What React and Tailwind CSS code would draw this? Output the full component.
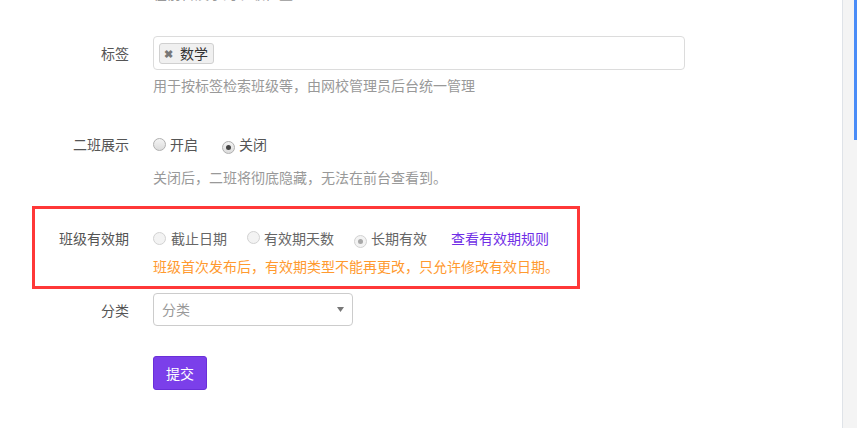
import React from "react";

const font = { fontFamily: '"Noto Sans CJK SC", "Noto Sans", sans-serif' };

const Radio = ({ checked, disabled }) => (
  <span
    className={`inline-flex h-[13px] w-[13px] items-center justify-center rounded-full border ${
      disabled ? "border-[#d2d2d2] bg-[#f3f3f3]" : "border-[#b0b0b0] bg-gradient-to-b from-[#f4f4f4] to-[#dcdcdc]"
    }`}
  >
    {checked && (
      <span className={`h-[5px] w-[5px] rounded-full ${disabled ? "bg-[#a8a8a8]" : "bg-[#444]"}`} />
    )}
  </span>
);

const Label = ({ children, w = "w-[129px]" }) => (
  <div className={`${w} shrink-0 text-right text-[14px] leading-5 text-[#555]`}>{children}</div>
);

export default function App() {
  return (
    <div className="flex h-[428px] w-full overflow-hidden bg-white" style={font}>
      <div className="flex-1">
        {/* 上一项的提示，被截断 */}
        <div className="-mt-[17px] ml-[153px] h-5 text-[14px] leading-5 text-[#999]">在前台展示的班级位置</div>

        {/* 标签 */}
        <div className="mt-[33px] flex items-center">
          <Label>标签</Label>
          <div className="ml-6 flex h-[34px] w-[532px] items-center rounded border border-[#dcdcdc] bg-white pl-[5px]">
            <span className="flex h-[21px] items-center gap-[7px] rounded-[3px] border border-[#d0d0d0] bg-[#f0f0f0] pl-[4px] pr-[5px] text-[14px] leading-5 text-[#333]">
              <span className="text-[11px] font-bold text-[#777]">✖</span>
              数学
            </span>
          </div>
        </div>
        <div className="ml-[153px] mt-[5px] text-[14px] leading-5 text-[#999]">
          用于按标签检索班级等，由网校管理员后台统一管理
        </div>

        {/* 二班展示 */}
        <div className="mt-[39px] flex items-center">
          <Label>二班展示</Label>
          <div className="ml-6 flex items-center text-[14px] leading-5 text-[#555]">
            <Radio />
            <span className="ml-[4px]">开启</span>
            <span className="ml-[24px]">
              <Radio checked />
            </span>
            <span className="ml-[4px]">关闭</span>
          </div>
        </div>
        <div className="ml-[153px] mt-[13px] text-[14px] leading-5 text-[#999]">
          关闭后，二班将彻底隐藏，无法在前台查看到。
        </div>

        {/* 班级有效期 */}
        <div className="ml-[32px] mt-[19px] w-[548px] border-[3px] border-[#ff3838] pb-[10px] pt-[19px]">
          <div className="flex items-center">
            <Label w="w-[94px]">班级有效期</Label>
            <div className="ml-6 flex items-center text-[14px] leading-5 text-[#666]">
              <Radio disabled />
              <span className="ml-[5px]">截止日期</span>
              <span className="ml-[20px]">
                <Radio disabled />
              </span>
              <span className="ml-[4px]">有效期天数</span>
              <span className="ml-[20px]">
                <Radio checked disabled />
              </span>
              <span className="ml-[4px]">长期有效</span>
              <a className="ml-[24px] cursor-pointer text-[#6f2ee6]">查看有效期规则</a>
            </div>
          </div>
          <div className="ml-[118px] mt-[8px] text-[14px] leading-5 text-[#ff9a30]">
            班级首次发布后，有效期类型不能再更改，只允许修改有效日期。
          </div>
        </div>

        {/* 分类 */}
        <div className="mt-[4px] flex items-center">
          <Label>分类</Label>
          <div className="ml-6 flex h-[33px] w-[200px] items-center justify-between rounded border border-[#cccccc] bg-white pl-[8px] pr-[8px] text-[14px] text-[#999]">
            <span>分类</span>
            <svg width="7" height="5" viewBox="0 0 7 5">
              <path d="M0 0 L7 0 L3.5 5 Z" fill="#777" />
            </svg>
          </div>
        </div>

        {/* 提交 */}
        <div className="ml-[153px] mt-[30px]">
          <button className="h-[34px] w-[54px] rounded-[3px] border border-[#6a2fd8] bg-[#7b3fea] text-[14px] text-white">
            提交
          </button>
        </div>
      </div>

      {/* 右侧滚动条 */}
      <div className="w-px bg-[#dfe3e8]" />
      <div className="flex w-[14px] justify-end bg-[#f4f4f4]">
        <div className="h-[140px] w-[3px] bg-[#4a8cf7]" />
      </div>
    </div>
  );
}
